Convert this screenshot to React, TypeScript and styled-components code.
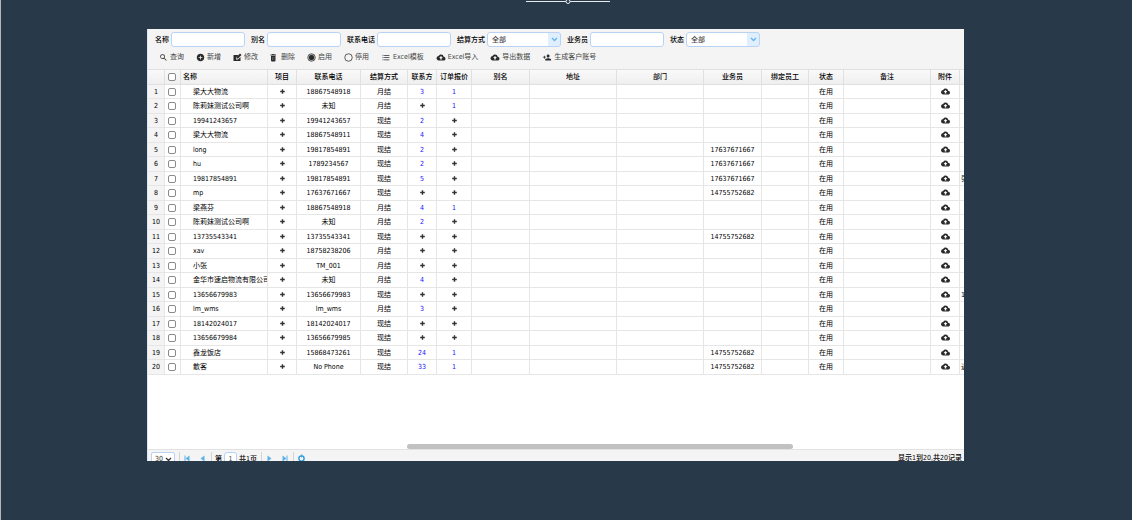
import React from "react";
import styled, { createGlobalStyle, css } from "styled-components";
import {
  MdSearch,
  MdAddCircle,
  MdFormatListBulleted,
  MdBackup,
  MdPersonAdd,
} from "react-icons/md";

const GlobalStyle = createGlobalStyle`
  * { box-sizing: border-box; }
  body {
    margin: 0;
    background: #283a4a;
    color: #111;
    font-family: "DejaVu Sans Condensed", "Noto Sans CJK SC", sans-serif;
    font-size: 7px;
    line-height: 10px;
  }
  button, input, select { font: inherit; color: inherit; margin: 0; padding: 0; }
`;

const Page = styled.div`
  display: grid;
  grid-template-columns: 146px minmax(0, 1fr) 168px;
  grid-template-rows: 29px minmax(0, 1fr) 59px;
  height: 100vh;
  border-left: 1px solid #b4b8bb;
`;

const Divider = styled.div`
  grid-column: 1 / -1;
  justify-self: center;
  display: flex;
  align-items: flex-start;
  padding-left: 2px;
`;

const Panel = styled.main`
  grid-column: 2;
  display: flex;
  flex-direction: column;
  overflow: hidden;
  background: #fff;
  border-left: 1px solid #dbe7f5;
`;

const Head = styled.header`
  flex: none;
  background: #f4f4f4;
  padding: 3px 0 7px 7px;
`;

const Filters = styled.form`
  display: flex;
  gap: 6px;
  white-space: nowrap;
`;

const Field = styled.label`
  display: flex;
  align-items: center;
  gap: 2px;
  font-weight: 500;
  color: #000;
`;

const control = css`
  background: #fff;
  border: 1px solid #b9d3f5;
  border-radius: 3px;
  outline: none;
  appearance: none;
`;

const TextInput = styled.input`
  ${control}
  width: 74px;
  height: 15px;
  padding: 0 4px;
`;

const SelectWrap = styled.span`
  display: grid;
  width: 74px;
  height: 15px;
`;

const Select = styled.select`
  ${control}
  grid-area: 1 / 1;
  padding: 1px 4px 0;
  color: #444;
  background: linear-gradient(#e0effe, #e0effe) right / 12px 100% no-repeat #fff;
`;

const Chevron = styled.svg`
  grid-area: 1 / 1;
  place-self: center end;
  width: 7px;
  height: 5px;
  margin-right: 3px;
  pointer-events: none;
`;

const Toolbar = styled.nav`
  display: flex;
  gap: 12px;
  padding: 5px 0 0 4px;
  white-space: nowrap;
`;

const Tool = styled.button<{ $wide?: boolean }>`
  display: flex;
  align-items: center;
  gap: 2px;
  height: 10px;
  border: 0;
  background: none;
  color: #444;
  svg {
    width: ${(p) => (p.$wide ? 10 : 9)}px;
    height: 9px;
    color: #2b2b2b;
  }
`;

const GridBody = styled.section`
  flex: 1;
  min-height: 0;
  display: flex;
  flex-direction: column;
  justify-content: space-between;
  overflow: hidden;
`;

const Table = styled.table`
  table-layout: fixed;
  border-collapse: separate;
  border-spacing: 0;
  width: 874px;
  tbody tr { height: 15px; }
  tbody tr:nth-child(odd) { height: 14px; }
`;

const Th = styled.th<{ $left?: boolean }>`
  height: 16px;
  padding: 0 0 0 ${(p) => (p.$left ? 2 : 0)}px;
  overflow: hidden;
  white-space: nowrap;
  font-weight: 500;
  color: #000;
  text-align: ${(p) => (p.$left ? "left" : "center")};
  background: linear-gradient(#f9f9f9, #efefef);
  border: solid #e0e0e0;
  border-width: 1px 1px 1px 0;
`;

const Td = styled.td<{ $pad?: number; $head?: boolean }>`
  padding: 0 0 0 ${(p) => p.$pad ?? 0}px;
  overflow: hidden;
  white-space: nowrap;
  color: #000;
  text-align: ${(p) => (p.$pad ? "left" : "center")};
  background: ${(p) => (p.$head ? "#f4f4f4" : "#fff")};
  border: solid #e6e6e6;
  border-width: 0 1px 1px 0;
`;

const Tick = styled.input`
  appearance: none;
  display: block;
  width: 8px;
  height: 8px;
  && { margin: 0 0 0 3px; }
  border: 1px solid #8a8a8a;
  border-radius: 2px;
  background: #fff;
`;

const Count = styled.a`
  color: #1414ff;
  text-decoration: none;
`;

const IconButton = styled.button`
  && {
    display: block;
    margin: 0 auto;
    padding-bottom: 1px;
  }
  border: 0;
  background: none;
  color: #2b2b2b;
  svg { display: block; }
`;

const ScrollThumb = styled.div`
  flex: none;
  align-self: flex-end;
  width: 47.3%;
  height: 5px;
  margin-right: 21%;
  border-radius: 3px;
  background: #c1c1c1;
`;

const Pager = styled.footer`
  flex: none;
  display: flex;
  align-items: flex-start;
  height: 12px;
  padding: 2px 2px 0 3px;
  overflow: hidden;
  background: #f4f4f4;
  border-top: 1px solid #e2e2e2;
  white-space: nowrap;
`;

const PageSize = styled.select`
  width: 24px;
  height: 14px;
  padding: 0 3px;
  color: #333;
  border: 1px solid #b9d3f5;
  border-radius: 2px;
  appearance: none;
  background: #fff;
`;

const SizeWrap = styled.span`
  display: grid;
  > * { grid-area: 1 / 1; }
`;

const PagerGroup = styled.div`
  display: flex;
  align-items: center;
  gap: 6px;
  height: 13px;
  margin-left: 4px;
  padding-left: 3px;
  border-left: 1px solid #d4d4d4;
`;

const PagerButton = styled.button`
  display: flex;
  width: 9px;
  height: 9px;
  border: 0;
  background: none;
`;

const PageLabel = styled.label`
  display: flex;
  align-items: center;
  gap: 2px;
  font-weight: 500;
  color: #000;
`;

const PageInput = styled.input`
  ${control}
  width: 13px;
  height: 14px;
  text-align: center;
  color: #444;
`;

const Summary = styled.span`
  margin: 1px 0 0 auto;
  font-weight: 500;
  color: #000;
`;

const EditIcon = () => (
  <svg viewBox="0 0 18 18" fill="currentColor">
    <path d="M1 4h10L6 9v4h4l5-5v8H1z" />
    <path d="M14 1l3 3-7 7H7V8z" />
  </svg>
);

const TrashIcon = () => (
  <svg viewBox="0 0 18 18" fill="currentColor">
    <path d="M1 3h3l1-1h3l1 1h3v2H1zM2 6h9v9q0 2-2 2H4q-2 0-2-2z" />
    <path d="M5 8v6M8 8v6" stroke="#8a8a8a" />
  </svg>
);

const RadioIcon = ({ on }: { on?: boolean }) => (
  <svg viewBox="0 0 18 18" fill="none" stroke="currentColor" strokeWidth="1.5">
    <circle cx="9" cy="9" r="7.5" />
    {on && <circle cx="9" cy="9" r="5" fill="currentColor" />}
  </svg>
);

const Plus = () => (
  <svg width="5" height="5" viewBox="0 0 5 5" stroke="#333" strokeWidth="1.400" fill="none">
    <path d="M2.500 .2v4.600M.2 2.500h4.600" />
  </svg>
);

const TOOLS: { label: string; icon: React.ReactNode; wide?: boolean }[] = [
  { label: "查询", icon: <MdSearch /> },
  { label: "新增", icon: <MdAddCircle /> },
  { label: "修改", icon: <EditIcon /> },
  { label: "删除", icon: <TrashIcon /> },
  { label: "启用", icon: <RadioIcon on /> },
  { label: "停用", icon: <RadioIcon /> },
  { label: "Excel模板", icon: <MdFormatListBulleted />, wide: true },
  { label: "Excel导入", icon: <MdBackup />, wide: true },
  { label: "导出数据", icon: <MdBackup />, wide: true },
  { label: "生成客户账号", icon: <MdPersonAdd />, wide: true },
];

const FILTERS = [
  { label: "名称" },
  { label: "别名" },
  { label: "联系电话" },
  { label: "结算方式", select: true },
  { label: "业务员" },
  { label: "状态", select: true },
];

const WIDTHS = [17, 16, 87, 29, 64, 47, 29, 35, 58, 87, 87, 58, 47, 35, 87, 29, 62];
const HEADERS = [
  "项目", "联系电话", "结算方式", "联系方", "订单报价", "别名", "地址",
  "部门", "业务员", "绑定员工", "状态", "备注", "附件", "",
];

type Row = [name: string, phone: string, pay: string, contacts: string, quotes: string, sales?: string, extra?: string];

const ROWS: Row[] = [
  ["梁大大物流", "18867548918", "月结", "3", "1"],
  ["陈莉妹测试公司啊", "未知", "月结", "", "1"],
  ["19941243657", "19941243657", "现结", "2", ""],
  ["梁大大物流", "18867548911", "现结", "4", ""],
  ["long", "19817854891", "现结", "2", "", "17637671667"],
  ["hu", "1789234567", "现结", "2", "", "17637671667"],
  ["19817854891", "19817854891", "现结", "5", "", "17637671667", "张"],
  ["mp", "17637671667", "现结", "", "", "14755752682"],
  ["梁燕芬", "18867548918", "月结", "4", "1"],
  ["陈莉妹测试公司啊", "未知", "月结", "2", ""],
  ["13735543341", "13735543341", "现结", "", "", "14755752682"],
  ["xav", "18758238206", "月结", "", ""],
  ["小张", "TM_001", "月结", "", ""],
  ["金华市速启物流有限公司", "未知", "月结", "4", ""],
  ["13656679983", "13656679983", "现结", "", "", "", "1"],
  ["lm_wms", "lm_wms", "月结", "3", ""],
  ["18142024017", "18142024017", "现结", "", ""],
  ["13656679984", "13656679985", "现结", "", ""],
  ["鑫龙饭店", "15868473261", "现结", "24", "1", "14755752682"],
  ["散客", "No Phone", "现结", "33", "1", "14755752682", "近"],
];

const CountCell = ({ value, label }: { value: string; label: string }) => (
  <Td>
    {value ? <Count href="#">{value}</Count> : <IconButton aria-label={label}><Plus /></IconButton>}
  </Td>
);

const Arrow = ({ flip, bar }: { flip?: boolean; bar?: boolean }) => (
  <svg width="9" height="9" viewBox="0 0 9 9" fill="#5db2ea">
    <g transform={flip ? "matrix(-1 0 0 1 9 0)" : undefined}>
      <path d="M6.500 1.500v6L2.500 4.500z" />
      {bar && <path d="M1.500 1.500h1v6h-1z" />}
    </g>
  </svg>
);

export default function App() {
  return (
    <>
      <GlobalStyle />
      <Page>
        <Divider>
          <svg width="84" height="5" viewBox="0 0 84 5" fill="none" stroke="#e8ecef">
            <path d="M0 1.500h40M44 1.500h40" />
            <circle cx="42" cy="1.500" r="2" fill="#283a4a" />
          </svg>
        </Divider>
        <Panel>
          <Head>
            <Filters>
              {FILTERS.map((f) => (
                <Field key={f.label}>
                  {f.label}
                  {f.select ? (
                    <SelectWrap>
                      <Select><option>全部</option></Select>
                      <Chevron viewBox="0 0 7 5" fill="none" stroke="#62b4ee" strokeWidth="1.300">
                        <path d="M1 1l2.500 2.500L6 1" />
                      </Chevron>
                    </SelectWrap>
                  ) : (
                    <TextInput type="text" />
                  )}
                </Field>
              ))}
            </Filters>
            <Toolbar>
              {TOOLS.map((t) => (
                <Tool key={t.label} type="button" $wide={t.wide}>
                  {t.icon}
                  {t.label}
                </Tool>
              ))}
            </Toolbar>
          </Head>
          <GridBody>
            <Table>
              <colgroup>
                {WIDTHS.map((w, i) => <col key={i} width={w} />)}
              </colgroup>
              <thead>
                <tr>
                  <Th />
                  <Th><Tick type="checkbox" aria-label="全选" /></Th>
                  <Th $left>名称</Th>
                  {HEADERS.map((h, i) => <Th key={i}>{h}</Th>)}
                </tr>
              </thead>
              <tbody>
                {ROWS.map(([name, phone, pay, contacts, quotes, sales, extra], i) => (
                  <tr key={i}>
                    <Td $head>{i + 1}</Td>
                    <Td><Tick type="checkbox" aria-label={name} /></Td>
                    <Td $pad={12}>{name}</Td>
                    <Td><IconButton aria-label="项目"><Plus /></IconButton></Td>
                    <Td>{phone}</Td>
                    <Td>{pay}</Td>
                    <CountCell value={contacts} label="联系方" />
                    <CountCell value={quotes} label="订单报价" />
                    <Td />
                    <Td />
                    <Td />
                    <Td>{sales}</Td>
                    <Td />
                    <Td>在用</Td>
                    <Td />
                    <Td><IconButton aria-label="附件"><MdBackup size={9} /></IconButton></Td>
                    <Td $pad={1}>{extra}</Td>
                  </tr>
                ))}
              </tbody>
            </Table>
            <ScrollThumb />
          </GridBody>
          <Pager>
            <SizeWrap>
              <PageSize aria-label="每页条数"><option>30</option></PageSize>
              <Chevron viewBox="0 0 7 5" fill="none" stroke="#333" strokeWidth="1.300">
                <path d="M1 1l2.500 2.500L6 1" />
              </Chevron>
            </SizeWrap>
            <PagerGroup>
              <PagerButton aria-label="首页"><Arrow bar /></PagerButton>
              <PagerButton aria-label="上一页"><Arrow /></PagerButton>
            </PagerGroup>
            <PagerGroup>
              <PageLabel>第<PageInput defaultValue="1" />共1页</PageLabel>
            </PagerGroup>
            <PagerGroup>
              <PagerButton aria-label="下一页"><Arrow flip /></PagerButton>
              <PagerButton aria-label="末页"><Arrow flip bar /></PagerButton>
            </PagerGroup>
            <PagerGroup>
              <PagerButton aria-label="刷新">
                <svg width="9" height="9" viewBox="0 0 9 9" fill="none" stroke="#2f9be0" strokeWidth="1.400">
                  <circle cx="4.500" cy="4.500" r="2.600" />
                  <path d="M4 .5l1.500 1.400L4 3.300" strokeWidth="1" />
                </svg>
              </PagerButton>
            </PagerGroup>
            <Summary>显示1到20,共20记录</Summary>
          </Pager>
        </Panel>
      </Page>
    </>
  );
}
